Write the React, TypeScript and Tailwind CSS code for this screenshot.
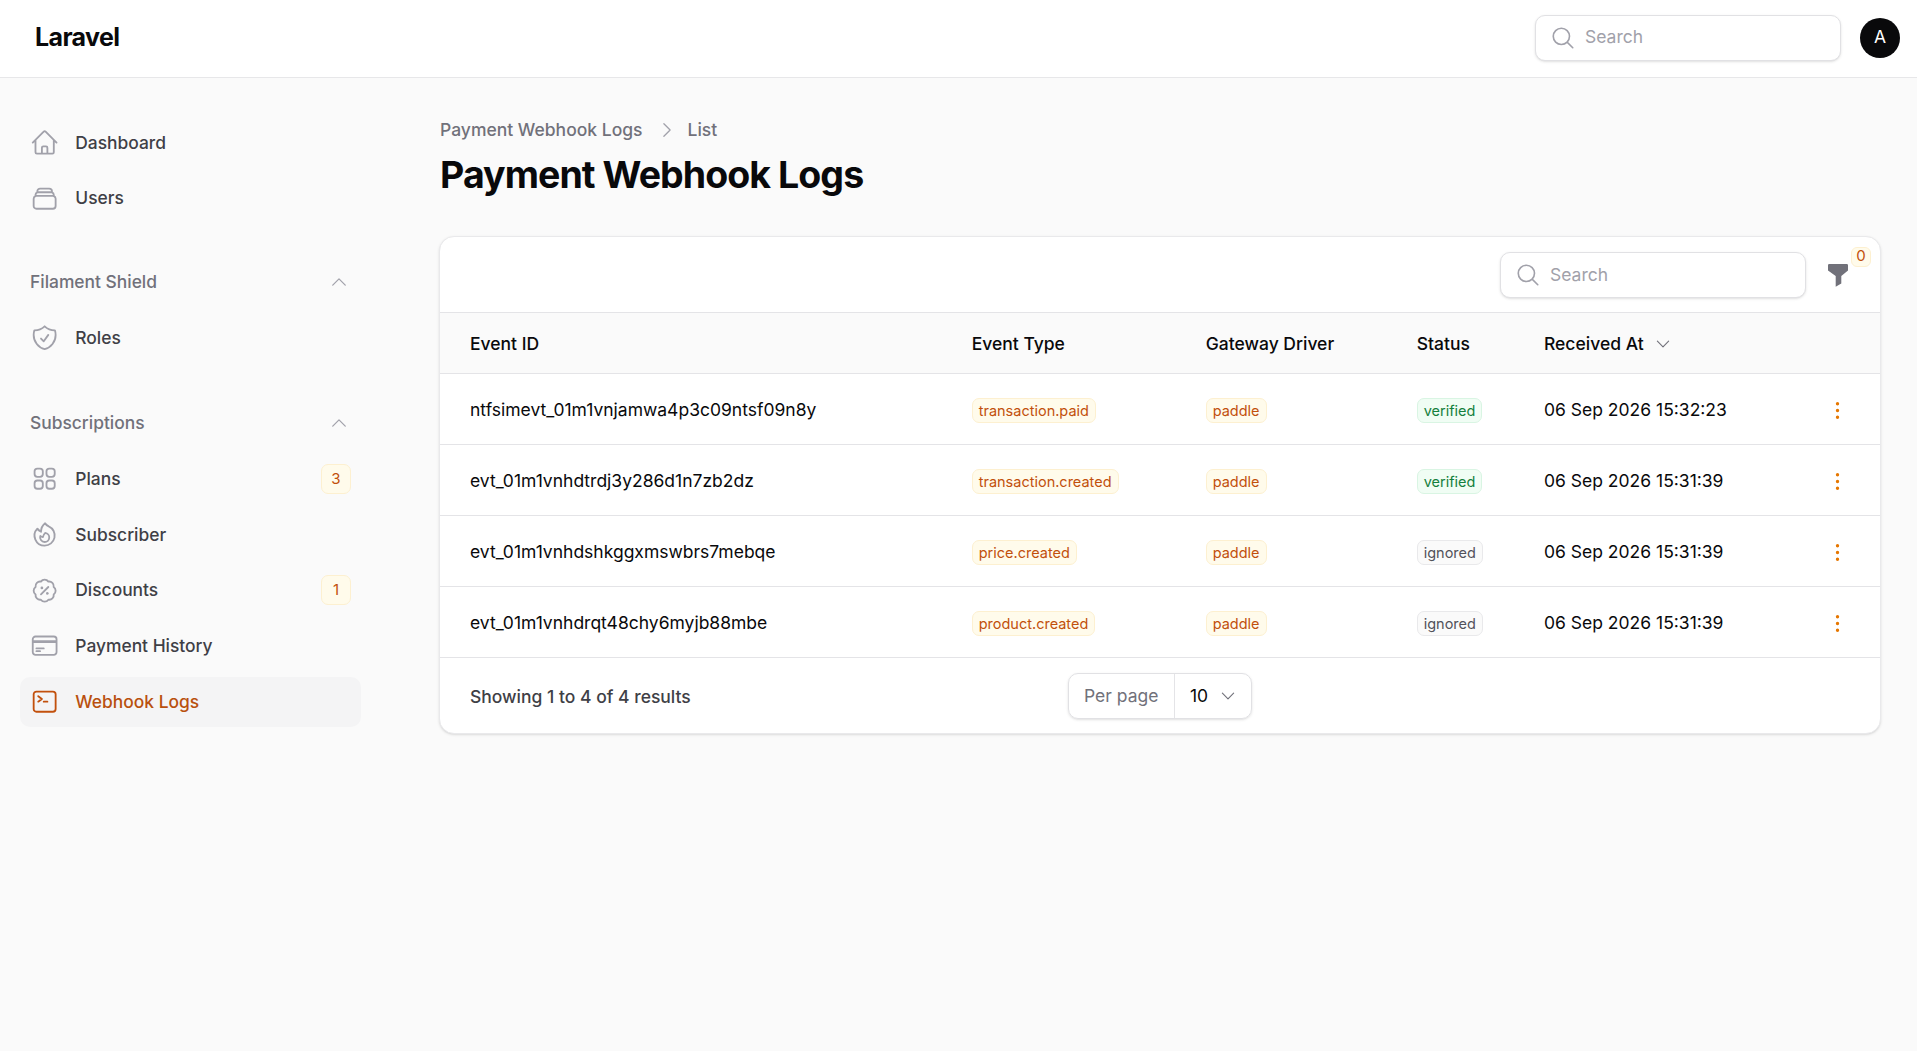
import {
  HiEllipsisVertical,
  HiOutlineChevronDown,
  HiOutlineChevronRight,
  HiOutlineChevronUp,
  HiOutlineCommandLine,
  HiOutlineCreditCard,
  HiOutlineFire,
  HiOutlineHome,
  HiOutlineMagnifyingGlass,
  HiOutlinePercentBadge,
  HiOutlineRectangleStack,
  HiOutlineShieldCheck,
  HiOutlineSquares2X2,
} from 'react-icons/hi2';
import type { IconType } from 'react-icons';

type NavEntry = { label: string; icon: IconType; badge?: string; active?: boolean };

const subscriptions: NavEntry[] = [
  { label: 'Plans', icon: HiOutlineSquares2X2, badge: '3' },
  { label: 'Subscriber', icon: HiOutlineFire },
  { label: 'Discounts', icon: HiOutlinePercentBadge, badge: '1' },
  { label: 'Payment History', icon: HiOutlineCreditCard },
  { label: 'Webhook Logs', icon: HiOutlineCommandLine, active: true },
];

const logs = [
  { id: 'ntfsimevt_01m1vnjamwa4p3c09ntsf09n8y', type: 'transaction.paid', status: 'verified', at: '06 Sep 2026 15:32:23' },
  { id: 'evt_01m1vnhdtrdj3y286d1n7zb2dz', type: 'transaction.created', status: 'verified', at: '06 Sep 2026 15:31:39' },
  { id: 'evt_01m1vnhdshkggxmswbrs7mebqe', type: 'price.created', status: 'ignored', at: '06 Sep 2026 15:31:39' },
  { id: 'evt_01m1vnhdrqt48chy6myjb88mbe', type: 'product.created', status: 'ignored', at: '06 Sep 2026 15:31:39' },
];

const rowGrid = 'grid grid-cols-[501.7px_234px_211px_127.3px_1fr_24px] items-center pl-[30px] pr-[32px] pt-[2px]';

function SearchBox() {
  return (
    <div className="flex h-[46px] w-[306px] items-center gap-[9px] rounded-[10px] border border-[#e1e1e4] bg-white pl-[14px] shadow-sm">
      <HiOutlineMagnifyingGlass className="h-[26px] w-[26px] shrink-0 text-[#a1a1aa]" />
      <input
        placeholder="Search"
        className="w-full bg-transparent text-[17.5px] text-[#09090b] outline-none placeholder:text-[#a1a1aa]"
      />
    </div>
  );
}

function NavItem({ label, icon: Icon, badge, active }: NavEntry) {
  return (
    <div className={`flex h-[50px] items-center rounded-[10px] pl-[10px] pr-[10px] ${active ? 'bg-[#f4f4f5]' : ''}`}>
      <Icon className={`h-[29.3px] w-[29.3px] shrink-0 ${active ? 'text-[#c2500c]' : 'text-[#a1a1aa]'}`} />
      <span className={`ml-[16px] flex-1 text-[17.4px] font-medium ${active ? 'text-[#b9500e]' : 'text-[#3f3f46]'}`}>
        {label}
      </span>
      {badge && (
        <span className="flex h-[30px] w-[30px] items-center justify-center rounded-[7px] border border-[#fdf0d0] bg-[#fffbeb] text-[15px] text-[#c2500c]">
          {badge}
        </span>
      )}
    </div>
  );
}

function GroupLabel({ label }: { label: string }) {
  return (
    <div className="flex h-[50px] items-center justify-between pl-[10px] pr-[12px]">
      <span className="text-[17.4px] font-medium text-[#71717a]">{label}</span>
      <HiOutlineChevronUp className="h-[20px] w-[20px] text-[#a1a1aa]" />
    </div>
  );
}

function Tag({ children, tone }: { children: string; tone: 'orange' | 'green' | 'gray' }) {
  const tones = {
    orange: 'border-[#fdf0d0] bg-[#fffbeb] text-[#c2500c]',
    green: 'border-[#d9f5e3] bg-[#f0fdf4] text-[#15803d]',
    gray: 'border-[#e9e9eb] bg-[#fafafa] text-[#52525b]',
  };
  return (
    <span className={`inline-flex h-[25px] items-center justify-self-start rounded-[7px] border px-[6px] pt-[1px] text-[14.5px] ${tones[tone]}`}>
      {children}
    </span>
  );
}

export default function App() {
  return (
    <div className="min-h-[1051px] bg-[#fafafa] font-['Inter',sans-serif]">
      {/* Topbar */}
      <header className="flex h-[78px] items-center justify-between border-b border-[#e7e7e9] bg-white pb-[2px] pl-[35px] pr-[17px]">
        <span className="text-[25px] font-bold tracking-tight text-[#09090b]">Laravel</span>
        <div className="flex items-center gap-[19px]">
          <SearchBox />
          <div className="flex h-[40px] w-[40px] items-center justify-center rounded-full bg-[#09090b] text-[17.5px] text-white">
            A
          </div>
        </div>
      </header>

      <div className="flex">
        {/* Sidebar */}
        <aside className="flex w-[392px] shrink-0 flex-col pl-[20px] pr-[31px] pt-[40px]">
          <nav className="flex flex-col gap-[5.4px]">
            <NavItem label="Dashboard" icon={HiOutlineHome} />
            <NavItem label="Users" icon={HiOutlineRectangleStack} />
          </nav>
          <nav className="mt-[33.4px] flex flex-col gap-[5.8px]">
            <GroupLabel label="Filament Shield" />
            <NavItem label="Roles" icon={HiOutlineShieldCheck} />
          </nav>
          <nav className="mt-[35px] flex flex-col gap-[5.6px]">
            <GroupLabel label="Subscriptions" />
            <div className="mt-[0.8px] flex flex-col gap-[5.7px]">
              {subscriptions.map((item) => (
                <NavItem key={item.label} {...item} />
              ))}
            </div>
          </nav>
        </aside>

        {/* Content */}
        <main className="min-w-0 flex-1 pl-[48px] pr-[36px] pt-[40px]">
          <div className="flex h-[24px] items-center text-[17.5px] font-medium text-[#71717a]">
            <span>Payment Webhook Logs</span>
            <HiOutlineChevronRight className="ml-[15px] mr-[10px] h-[20px] w-[20px] text-[#a1a1aa]" />
            <span>List</span>
          </div>
          <h1 className="mt-[11px] text-[37.5px] font-bold leading-[44px] tracking-tight text-[#09090b]">
            Payment Webhook Logs
          </h1>

          <section className="-ml-[1px] mt-[39px] overflow-hidden rounded-[15px] border border-[#e9e9eb] bg-white shadow-sm">
            <div className="flex h-[75px] items-center justify-end pr-[32px] pt-[1px]">
              <SearchBox />
              <div className="relative ml-[22px]">
                {/* funnel drawn by hand, the heroicons one has a wider body */}
                <svg viewBox="0 0 20 23" className="h-[23px] w-[20px] fill-[#71717a]">
                  <path d="M1.2 0H18.8Q20 0 20 1.2V6.5L13.3 12V19.5L7.7 22.8V12L0 6.5V1.2Q0 0 1.2 0Z" />
                </svg>
                <span className="absolute -right-[23px] -top-[17px] flex h-[20px] w-[20px] items-center justify-center rounded-[6px] border border-[#fdf0d0] bg-[#fffbeb] text-[15px] text-[#c2500c]">
                  0
                </span>
              </div>
            </div>

            <div className={`${rowGrid} h-[61px] border-t border-[#e4e4e7] bg-[#fafafa] text-[17.5px] font-medium text-[#09090b]`}>
              <span>Event ID</span>
              <span>Event Type</span>
              <span>Gateway Driver</span>
              <span>Status</span>
              <span className="flex items-center gap-[10px]">
                Received At
                <HiOutlineChevronDown className="h-[18px] w-[18px] text-[#71717a]" />
              </span>
            </div>

            {logs.map((log) => (
              <div key={log.id} className={`${rowGrid} h-[71px] border-t border-[#e4e4e7] text-[17.5px] text-[#09090b]`}>
                <span>{log.id}</span>
                <Tag tone="orange">{log.type}</Tag>
                <Tag tone="orange">paddle</Tag>
                <Tag tone={log.status === 'verified' ? 'green' : 'gray'}>{log.status}</Tag>
                <span>{log.at}</span>
                <HiEllipsisVertical className="h-[27px] w-[27px] text-[#e67700]" />
              </div>
            ))}

            <div className="grid h-[76px] grid-cols-[1fr_auto_1fr] items-center border-t border-[#e4e4e7] text-[17.5px]">
              <span className="pl-[30px] pt-[3px] font-medium text-[#3f3f46]">Showing 1 to 4 of 4 results</span>
              <div className="flex h-[46px] w-[184px] items-center rounded-[10px] border border-[#e1e1e4] shadow-sm">
                <span className="flex h-full w-[106px] items-center border-r border-[#e4e4e7] pl-[15px] pt-[2px] text-[#71717a]">Per page</span>
                <span className="pl-[15px] pt-[2px] text-[#09090b]">10</span>
                <HiOutlineChevronDown className="ml-[11px] h-[18px] w-[18px] text-[#71717a]" />
              </div>
              <span />
            </div>
          </section>
        </main>
      </div>
    </div>
  );
}
